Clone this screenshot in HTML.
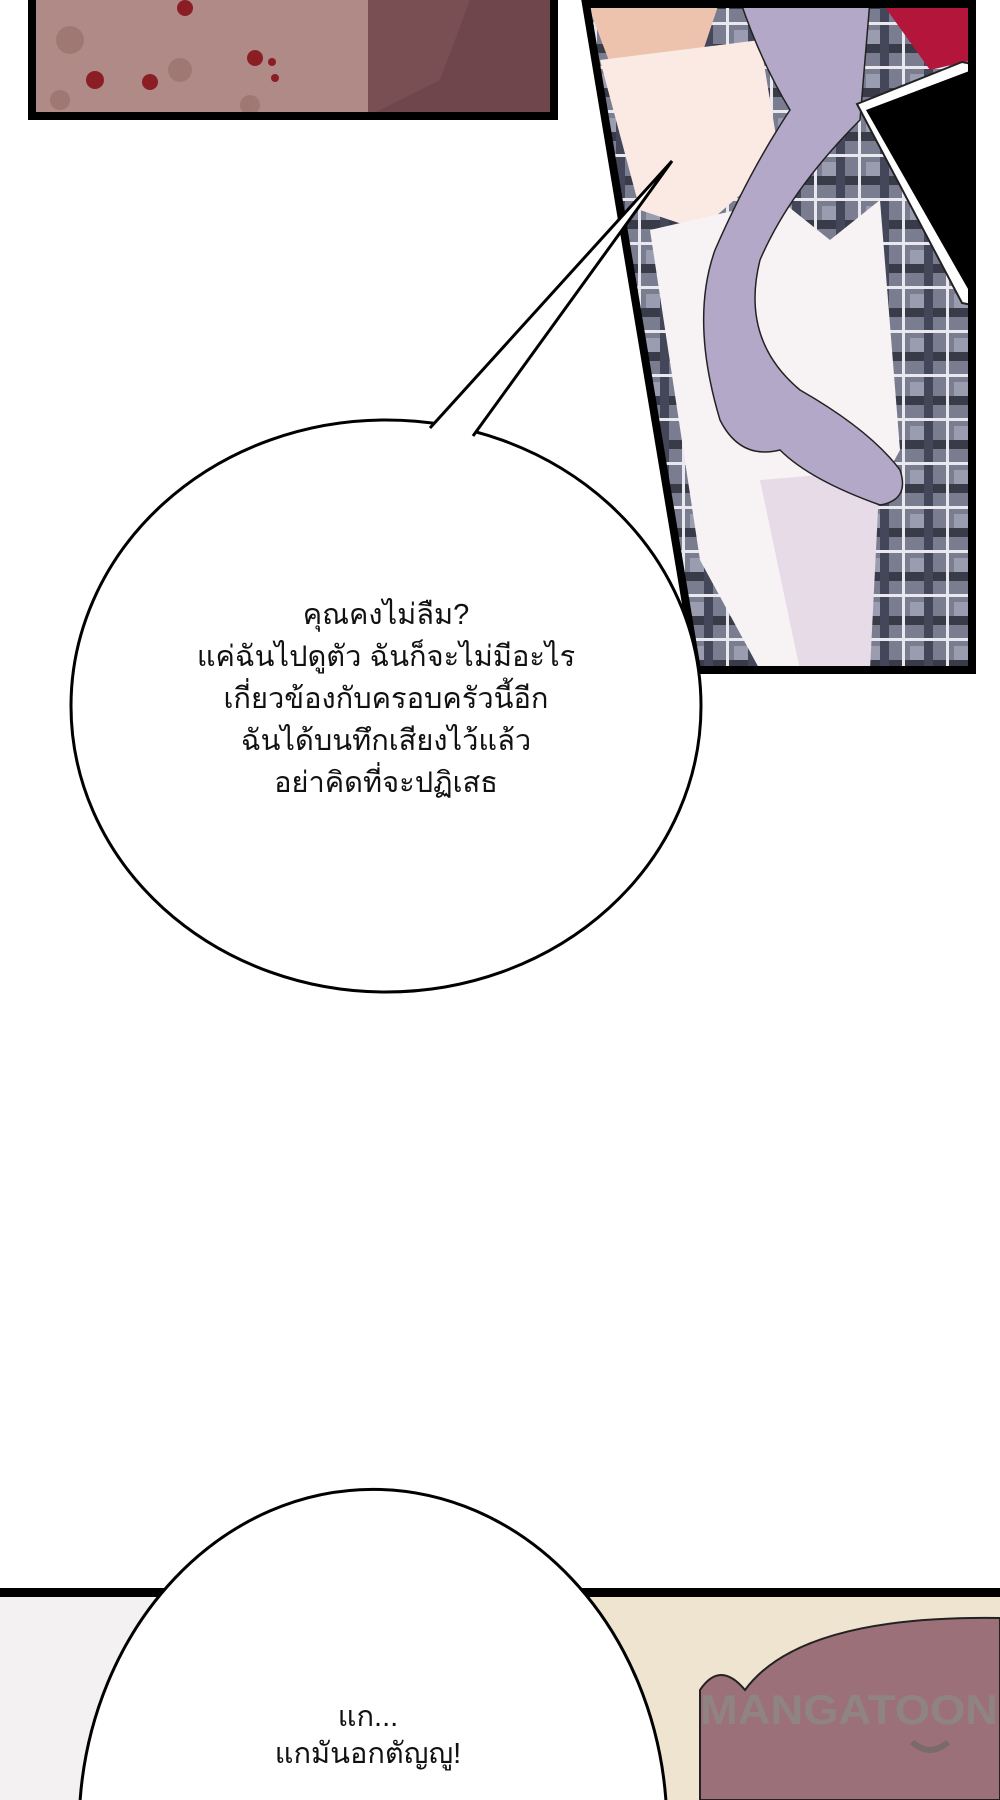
<!DOCTYPE html>
<html><head><meta charset="utf-8"><style>
html,body{margin:0;padding:0;background:#fff;width:1000px;height:1800px;overflow:hidden;}
svg{display:block;overflow:hidden;}
text{font-family:"Liberation Sans","DejaVu Sans",sans-serif;}
</style></head><body>
<svg width="1000" height="1800" viewBox="0 0 1000 1800" xmlns="http://www.w3.org/2000/svg">
<defs>
<pattern id="plaid" width="44" height="44" patternUnits="userSpaceOnUse">
<rect width="44" height="44" fill="#7a7d90"/>
<rect x="0" y="0" width="44" height="9" fill="#3a3b48"/>
<rect x="0" y="0" width="9" height="44" fill="#44465a"/>
<rect x="0" y="22" width="44" height="3" fill="#e8e8ee"/>
<rect x="22" y="0" width="3" height="44" fill="#e8e8ee"/>
<rect x="30" y="30" width="14" height="14" fill="#9a9db0"/>
</pattern>
<clipPath id="rp"><polygon points="586,0 972,0 972,670 697,670"/></clipPath>
</defs>

<rect x="32" y="0" width="522" height="116" fill="#b08a86"/>
<polygon points="368,0 554,0 554,116 368,116" fill="#6e464b"/>
<polygon points="368,0 470,0 440,80 368,116" fill="#7d5358" opacity="0.7"/>
<g fill="#8b1e24">
<circle cx="185" cy="8" r="8"/><circle cx="255" cy="58" r="8"/><circle cx="272" cy="62" r="4"/><circle cx="95" cy="80" r="9"/><circle cx="150" cy="82" r="8"/><circle cx="275" cy="78" r="4"/>
</g>
<g fill="#9c7470" opacity="0.8">
<circle cx="70" cy="40" r="14"/><circle cx="180" cy="70" r="12"/><circle cx="250" cy="105" r="10"/><circle cx="60" cy="100" r="10"/>
</g>
<path d="M32,0 V116 H554 V0" fill="none" stroke="#000" stroke-width="8"/>

<g clip-path="url(#rp)">
<rect x="580" y="0" width="400" height="680" fill="url(#plaid)"/>
<polygon points="586,0 720,0 700,60 620,90" fill="#eec3ad"/>
<polygon points="600,60 760,40 780,160 700,230 640,210" fill="#fbeae4"/>
<polygon points="880,0 972,0 972,60 930,70" fill="#b3163a"/>
<polygon points="650,230 780,200 830,240 880,200 900,450 840,560 870,670 760,670 700,560" fill="#f7f2f4"/>
<polygon points="760,480 880,470 870,670 800,670" fill="#e6dbe6"/>
<path d="M740,0 L870,0 L860,120 Q790,190 760,260 Q740,340 800,390 Q870,430 900,470 Q910,500 880,505 Q810,480 780,450 Q740,460 720,420 Q690,320 715,250 Q750,170 790,110 Q760,60 740,0Z" fill="#b4a8c8" stroke="#222" stroke-width="1.5"/>
<polygon points="857,104 962,62 972,64 972,305 962,303" fill="#fff" stroke="#222" stroke-width="2"/>
<polygon points="866,110 972,70 972,296" fill="#000"/>
</g>
<polygon points="586,4 972,4 972,670 697,670" fill="none" stroke="#000" stroke-width="8"/>

<ellipse cx="386" cy="706" rx="315" ry="286" fill="#fff" stroke="#000" stroke-width="3"/>
<polygon points="430,428 672,161 473,436" fill="#fff"/>
<polyline points="430,428 672,161 473,436" fill="none" stroke="#000" stroke-width="3"/>
<g font-size="29" fill="#111" text-anchor="middle">
<text x="386" y="624">คุณคงไม่ลืม?</text>
<text x="386" y="666">แค่ฉันไปดูตัว ฉันก็จะไม่มีอะไร</text>
<text x="386" y="708">เกี่ยวข้องกับครอบครัวนี้อีก</text>
<text x="386" y="750">ฉันได้บนทึกเสียงไว้แล้ว</text>
<text x="386" y="792">อย่าคิดที่จะปฏิเสธ</text>
</g>

<rect x="0" y="1596" width="1000" height="204" fill="#f3f1f1"/>
<rect x="330" y="1596" width="670" height="204" fill="#efe4cf"/>
<path d="M700,1690 Q720,1660 745,1690 Q800,1615 1000,1618 L1000,1800 L700,1800Z" fill="#9c7078" stroke="#222" stroke-width="2"/>
<text x="700" y="1724" font-size="42" font-weight="bold" fill="#8e8686" opacity="0.9" textLength="298" lengthAdjust="spacingAndGlyphs">MANGATOON</text>
<path d="M912,1742 Q930,1758 948,1742" fill="none" stroke="#7a6a6a" stroke-width="6"/>
<rect x="0" y="1588" width="1000" height="9" fill="#000"/>
<path d="M80.1,1800 A294 340 0 0 1 665.9,1800 Z" fill="#fff"/>
<path d="M80.1,1800 A294 340 0 0 1 665.9,1800" fill="none" stroke="#000" stroke-width="3"/>
<g font-size="29" fill="#111" text-anchor="middle">
<text x="368" y="1726">แก...</text>
<text x="368" y="1763">แกมันอกตัญญู!</text>
</g>
</svg>
</body></html>
